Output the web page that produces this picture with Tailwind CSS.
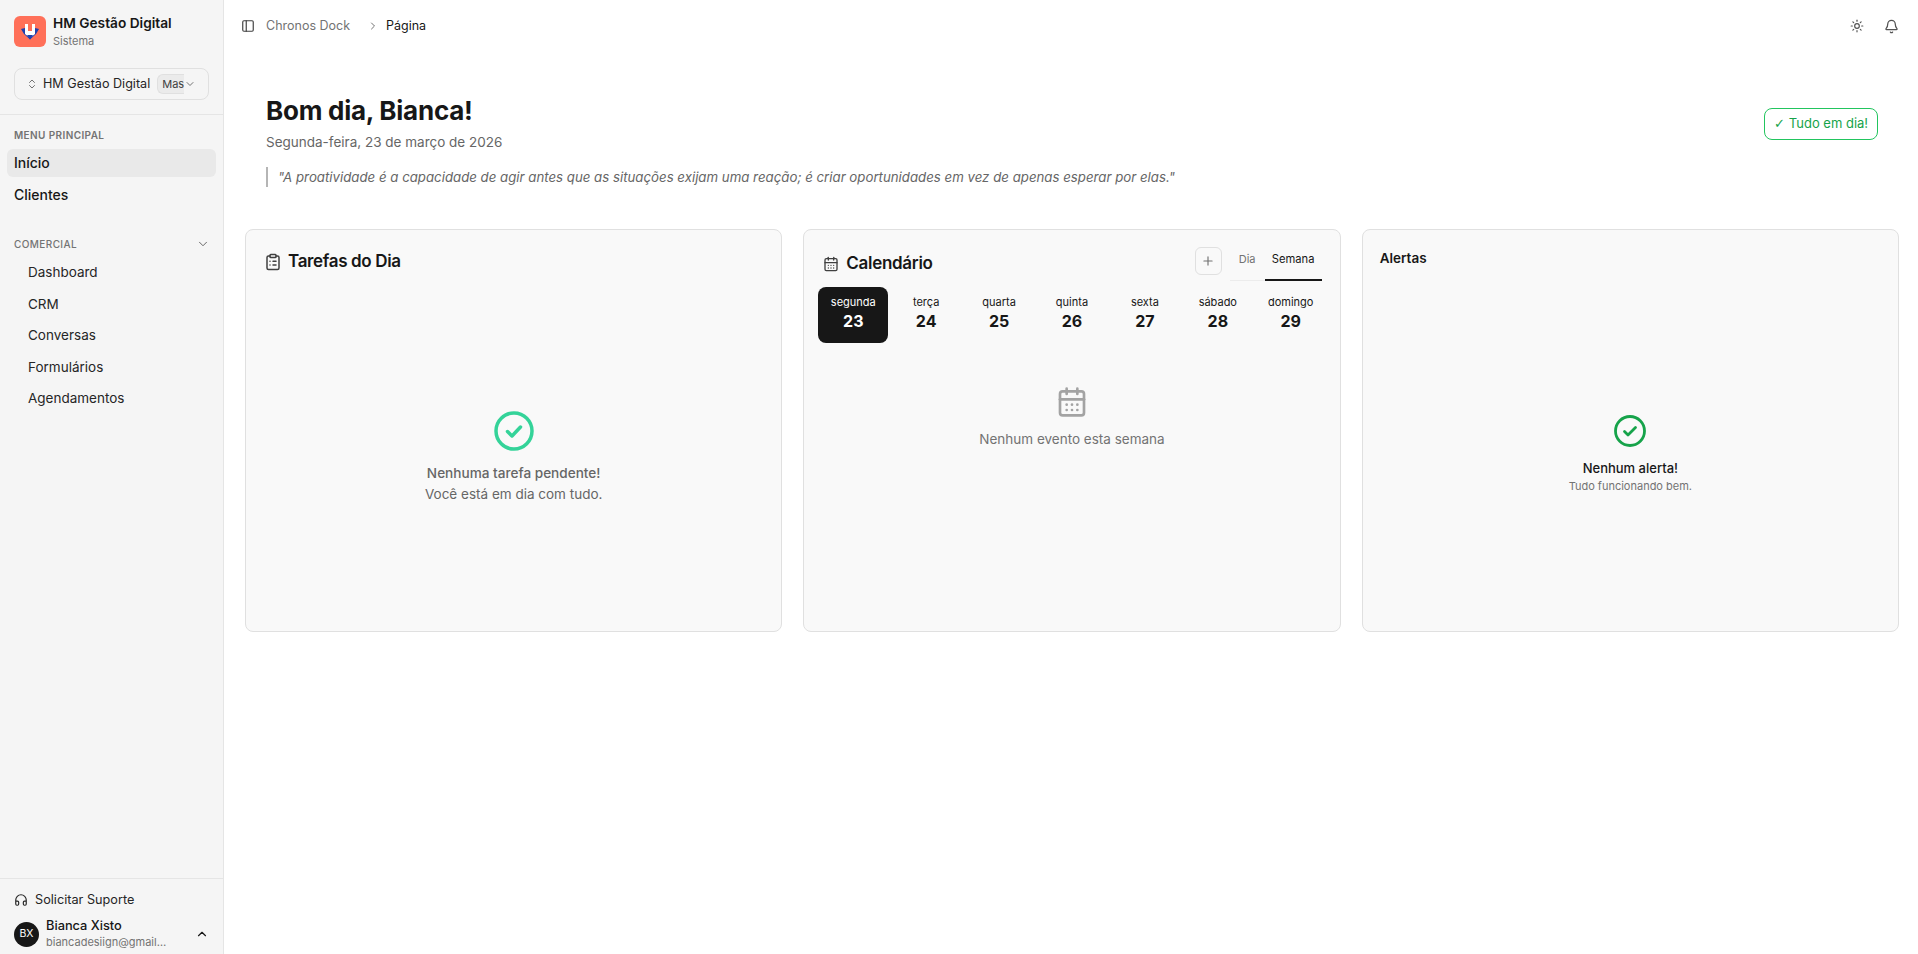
<!DOCTYPE html>
<html lang="pt-BR">
  <head>
    <meta charset="UTF-8" />
    <title>HM Gestão Digital</title>
    <script src="https://cdn.jsdelivr.net/npm/@tailwindcss/browser@4"></script>
  </head>
  <body class="bg-white font-['Inter',sans-serif] text-[#171717] h-[954px] w-[1918px] overflow-hidden flex">
    <!-- sidebar -->
    <aside class="w-[224px] h-full shrink-0 bg-[#f5f5f5] border-r border-[#e5e5e5] flex flex-col">
      <div class="flex items-center gap-[7px] pl-[14px] pt-[16px] h-[47px] box-border">
        <div class="w-8 h-[31px] rounded-md bg-[#ff7059] shrink-0">
          <svg width="32" height="31" viewBox="0 0 32 31">
            <path d="M7 13l4-1v4h10v-4l4 1-3 5-6 5.500-6-5.500z" fill="#1e40af" />
            <path d="M11 8h3v7h4V8h3v10l-5 4-5-4z" fill="#fff" />
            <path d="M13 19h6l-3 4.500z" fill="#1e40af" />
          </svg>
        </div>
        <div class="leading-none">
          <div class="text-[13.7px] font-semibold leading-[18px]">HM Gestão Digital</div>
          <div class="text-[11px] text-[#737373] leading-[16px] mt-[1px]">Sistema</div>
        </div>
      </div>
      <div class="px-[14px] mt-[21px] pb-[14px] border-b border-[#e5e5e5]">
        <div class="h-8 rounded-lg border border-[#e0e0e0] bg-[#f5f5f5] flex items-center pl-[11px] pr-2">
          <svg class="w-[12px] h-[12px] text-[#737373] shrink-0" viewBox="0 0 24 24" fill="none" stroke="currentColor" stroke-width="2" stroke-linecap="round" stroke-linejoin="round"><path d="m7 15 5 5 5-5" /><path d="m7 9 5-5 5 5" /></svg>
          <span class="text-[12.6px] ml-[5px] whitespace-nowrap text-[#262626]">HM Gestão Digital</span>
          <span class="ml-[7px] h-[20px] w-[27px] pl-1 rounded-l-md border-l border-y border-[#e0e0e0] bg-[#ebebeb] text-[11px] leading-[18px] text-[#404040] whitespace-nowrap">Mas</span>
          <svg class="w-3 h-3 text-[#737373] shrink-0" viewBox="0 0 24 24" fill="none" stroke="currentColor" stroke-width="2" stroke-linecap="round" stroke-linejoin="round"><path d="m6 9 6 6 6-6" /></svg>
        </div>
      </div>
      <div class="px-[14px] mt-[13px] text-[10px] font-semibold tracking-[0.4px] text-[#737373] leading-[15px]">MENU PRINCIPAL</div>
      <nav class="px-[7px] mt-[6px] flex flex-col gap-[4px] text-sm font-medium">
        <a class="h-7 rounded-md bg-[#e9e9e9] px-[7px] flex items-center">Início</a>
        <a class="h-7 px-[7px] flex items-center">Clientes</a>
      </nav>
      <div class="px-[14px] mt-[27px] flex items-center justify-between h-4">
        <span class="text-[10px] font-medium tracking-[0.4px] text-[#737373]">COMERCIAL</span>
        <svg class="w-3.5 h-3.5 text-[#525252] mr-[-1px]" viewBox="0 0 24 24" fill="none" stroke="currentColor" stroke-width="1.5" stroke-linecap="round" stroke-linejoin="round"><path d="m6 9 6 6 6-6" /></svg>
      </div>
      <div class="pl-[28px] mt-[5px] flex flex-col text-[13.5px] text-[#262626] leading-[31.5px]">
        <a>Dashboard</a>
        <a>CRM</a>
        <a>Conversas</a>
        <a>Formulários</a>
        <a>Agendamentos</a>
      </div>
      <div class="mt-auto border-t border-[#e5e5e5] h-[76px] px-[14px] pt-[11px] overflow-hidden">
        <div class="flex items-center gap-[7px] h-5 text-[12.7px] text-[#262626]">
          <svg class="w-3.5 h-3.5" viewBox="0 0 24 24" fill="none" stroke="currentColor" stroke-width="2" stroke-linecap="round" stroke-linejoin="round"><path d="M3 14h3a2 2 0 0 1 2 2v3a2 2 0 0 1-2 2H5a2 2 0 0 1-2-2v-7a9 9 0 0 1 18 0v7a2 2 0 0 1-2 2h-1a2 2 0 0 1-2-2v-3a2 2 0 0 1 2-2h3" /></svg>
          Solicitar Suporte
        </div>
        <div class="flex items-center mt-[8px]">
          <div class="w-[25px] h-[25px] rounded-full bg-[#171717] text-white text-[10.5px] flex items-center justify-center shrink-0">BX</div>
          <div class="ml-[7px] w-[128px] min-w-0">
            <div class="text-[12.8px] font-medium leading-[16px]">Bianca Xisto</div>
            <div class="text-[11px] text-[#737373] leading-[15px] truncate mt-[1px] w-[122px]">biancadesiign@gmail.com</div>
          </div>
          <svg class="w-[14px] h-[14px] ml-[21px] shrink-0" viewBox="0 0 24 24" fill="none" stroke="currentColor" stroke-width="2" stroke-linecap="round" stroke-linejoin="round"><path d="m18 15-6-6-6 6" /></svg>
        </div>
      </div>
    </aside>

    <!-- main -->
    <main class="flex-1 min-w-0 flex flex-col">
      <header class="h-[51px] flex items-center pl-[17px] pr-[19px] pt-[1px]">
        <svg class="w-[14px] h-[14px] text-[#404040]" viewBox="0 0 24 24" fill="none" stroke="currentColor" stroke-width="2" stroke-linecap="round" stroke-linejoin="round"><rect width="18" height="18" x="3" y="3" rx="2" /><path d="M9 3v18" /></svg>
        <span class="ml-[11px] text-[12.5px] text-[#737373]">Chronos Dock</span>
        <svg class="w-3 h-3 ml-[17px] text-[#737373]" viewBox="0 0 24 24" fill="none" stroke="currentColor" stroke-width="2" stroke-linecap="round" stroke-linejoin="round"><path d="m9 18 6-6-6-6" /></svg>
        <span class="ml-[7px] text-[12.5px]">Página</span>
        <div class="ml-auto flex items-center gap-[20px] text-[#525252]">
          <svg class="w-3.5 h-3.5" viewBox="0 0 24 24" fill="none" stroke="currentColor" stroke-width="2" stroke-linecap="round" stroke-linejoin="round"><circle cx="12" cy="12" r="4" /><path d="M12 2v2" /><path d="M12 20v2" /><path d="m4.930 4.930 1.410 1.410" /><path d="m17.660 17.660 1.410 1.410" /><path d="M2 12h2" /><path d="M20 12h2" /><path d="m6.340 17.660-1.410 1.410" /><path d="m19.070 4.930-1.410 1.410" /></svg>
          <svg class="w-[15px] h-[15px]" viewBox="0 0 24 24" fill="none" stroke="currentColor" stroke-width="2" stroke-linecap="round" stroke-linejoin="round"><path d="M10.268 21a2 2 0 0 0 3.464 0" /><path d="M3.262 15.326A1 1 0 0 0 4 17h16a1 1 0 0 0 .74-1.673C19.410 13.956 18 12.499 18 8A6 6 0 0 0 6 8c0 4.499-1.411 5.956-2.738 7.326" /></svg>
        </div>
      </header>

      <section class="pl-[21px] pr-[19px]">
        <div class="pl-[21px] pr-[21px] pt-[42px] flex items-start justify-between h-[178px]">
          <div>
            <h1 class="text-[26px] font-bold leading-[36px] tracking-[-0.25px]">Bom dia, Bianca!</h1>
            <p class="text-[13.5px] text-[#666] leading-5 mt-[3px]">Segunda-feira, 23 de março de 2026</p>
            <blockquote class="mt-[15px] border-l-2 border-[#b5b5b5] pl-[10px] h-5 text-[13.25px] italic text-[#666] leading-5">"A proatividade é a capacidade de agir antes que as situações exijam uma reação; é criar oportunidades em vez de apenas esperar por elas."</blockquote>
          </div>
          <div class="mt-[15px] h-8 w-[114px] justify-center rounded-lg border border-[#22c55e] text-[13px] text-[#16a34a] flex items-center whitespace-nowrap"><span class="font-['DejaVu_Sans',sans-serif] mr-1">✓</span>Tudo em dia!</div>
        </div>

        <div class="grid grid-cols-3 gap-[21px]">
          <!-- tarefas -->
          <div class="h-[403px] rounded-lg border border-[#e0e0e0] bg-[#f9f9f9] flex flex-col">
            <div class="flex items-center gap-[6px] pl-[18px] pt-[17px] h-[46px]">
              <svg class="w-[18px] h-[18px] text-[#404040]" viewBox="0 0 24 24" fill="none" stroke="currentColor" stroke-width="2" stroke-linecap="round" stroke-linejoin="round"><rect width="8" height="4" x="8" y="2" rx="1" /><path d="M16 4h2a2 2 0 0 1 2 2v14a2 2 0 0 1-2 2H6a2 2 0 0 1-2-2V6a2 2 0 0 1 2-2h2" /><path d="M12 11h4" /><path d="M12 16h4" /><path d="M8 11h.01" /><path d="M8 16h.01" /></svg>
              <h2 class="text-[17px] font-semibold tracking-[-0.35px]">Tarefas do Dia</h2>
            </div>
            <div class="flex flex-col items-center pt-[135px] text-[13.6px] text-[#666] leading-[21px]">
              <svg class="w-10 h-10 mb-[12px] text-[#34d399]" viewBox="0 0 40 40" fill="none" stroke="currentColor" stroke-linecap="round" stroke-linejoin="round"><circle cx="20" cy="20" r="18" stroke-width="3.500" /><path d="m13.500 20.500 4.500 4.500 8.500-9" stroke-width="3.500" /></svg>
              <p class="font-medium">Nenhuma tarefa pendente!</p>
              <p class="text-[13.5px]">Você está em dia com tudo.</p>
            </div>
          </div>

          <!-- calendario -->
          <div class="h-[403px] rounded-lg border border-[#e0e0e0] bg-[#f9f9f9] flex flex-col px-[14px]">
            <div class="flex items-start justify-between pt-[17px] h-[57px]">
              <div class="flex items-center gap-[7px] pl-[5px] h-[33px]">
                <svg class="w-4 h-4 text-[#404040]" viewBox="0 0 24 24" fill="none" stroke="currentColor" stroke-width="2" stroke-linecap="round" stroke-linejoin="round"><path d="M8 2v4" /><path d="M16 2v4" /><rect width="18" height="18" x="3" y="4" rx="2" /><path d="M3 10h18" /><path d="M8 14h.01" /><path d="M12 14h.01" /><path d="M16 14h.01" /><path d="M8 18h.01" /><path d="M12 18h.01" /><path d="M16 18h.01" /></svg>
                <h2 class="text-[17px] font-semibold tracking-[-0.3px]">Calendário</h2>
              </div>
              <div class="flex items-start mr-[4px]">
                <div class="w-[27px] h-[28px] rounded-md border border-[#e0e0e0] flex items-center justify-center text-[#737373]">
                  <svg class="w-3.5 h-3.5" viewBox="0 0 24 24" fill="none" stroke="currentColor" stroke-width="2" stroke-linecap="round" stroke-linejoin="round"><path d="M5 12h14" /><path d="M12 5v14" /></svg>
                </div>
                <div class="ml-2 flex h-[33px] text-[11px] border-b border-[#ececec] relative mt-[1px]">
                  <span class="w-[35px] text-center leading-[22px] text-[#737373]">Dia</span>
                  <span class="w-[57px] text-center leading-[22px] text-[11.2px] border-b-2 border-[#171717] h-[33px]">Semana</span>
                </div>
              </div>
            </div>
            <div class="grid grid-cols-7 gap-[3px] text-center">
              <div class="h-[56px] rounded-lg bg-[#171717] text-white pt-[7px]"><div class="text-[11px] leading-[16px]">segunda</div><div class="text-base font-bold leading-[22px]">23</div></div>
              <div class="h-[56px] pt-[7px]"><div class="text-[11px] leading-[16px]">terça</div><div class="text-base font-bold leading-[22px]">24</div></div>
              <div class="h-[56px] pt-[7px]"><div class="text-[11px] leading-[16px]">quarta</div><div class="text-base font-bold leading-[22px]">25</div></div>
              <div class="h-[56px] pt-[7px]"><div class="text-[11px] leading-[16px]">quinta</div><div class="text-base font-bold leading-[22px]">26</div></div>
              <div class="h-[56px] pt-[7px]"><div class="text-[11px] leading-[16px]">sexta</div><div class="text-base font-bold leading-[22px]">27</div></div>
              <div class="h-[56px] pt-[7px]"><div class="text-[11px] leading-[16px]">sábado</div><div class="text-base font-bold leading-[22px]">28</div></div>
              <div class="h-[56px] pt-[7px]"><div class="text-[11px] leading-[16px]">domingo</div><div class="text-base font-bold leading-[22px]">29</div></div>
            </div>
            <div class="flex flex-col items-center mt-[43px]">
              <svg class="w-8 h-8 text-[#a3a3a3]" viewBox="0 0 24 24" fill="none" stroke="currentColor" stroke-width="2" stroke-linecap="round" stroke-linejoin="round"><path d="M8 2v4" /><path d="M16 2v4" /><rect width="18" height="18" x="3" y="4" rx="2" /><path d="M3 10h18" /><path d="M8 14h.01" /><path d="M12 14h.01" /><path d="M16 14h.01" /><path d="M8 18h.01" /><path d="M12 18h.01" /><path d="M16 18h.01" /></svg>
              <p class="mt-[11px] text-[13.5px] text-[#737373] leading-5">Nenhum evento esta semana</p>
            </div>
          </div>

          <!-- alertas -->
          <div class="h-[403px] rounded-lg border border-[#e0e0e0] bg-[#f9f9f9] flex flex-col">
            <h2 class="pl-[17px] pt-[18px] text-[13.5px] font-semibold leading-5">Alertas</h2>
            <div class="flex flex-col items-center pt-[147px]">
              <svg class="w-8 h-8 text-[#16a34a]" viewBox="0 0 32 32" fill="none" stroke="currentColor" stroke-linecap="round" stroke-linejoin="round"><circle cx="16" cy="16" r="14.500" stroke-width="2.800" /><path d="m10.500 16.500 3.500 3.500 7.500-7.500" stroke-width="2.800" /></svg>
              <p class="mt-[12px] text-[13px] font-medium leading-[18px]">Nenhum alerta!</p>
              <p class="mt-[1px] text-[11px] text-[#737373] leading-[16px]">Tudo funcionando bem.</p>
            </div>
          </div>
        </div>
      </section>
    </main>
  </body>
</html>
